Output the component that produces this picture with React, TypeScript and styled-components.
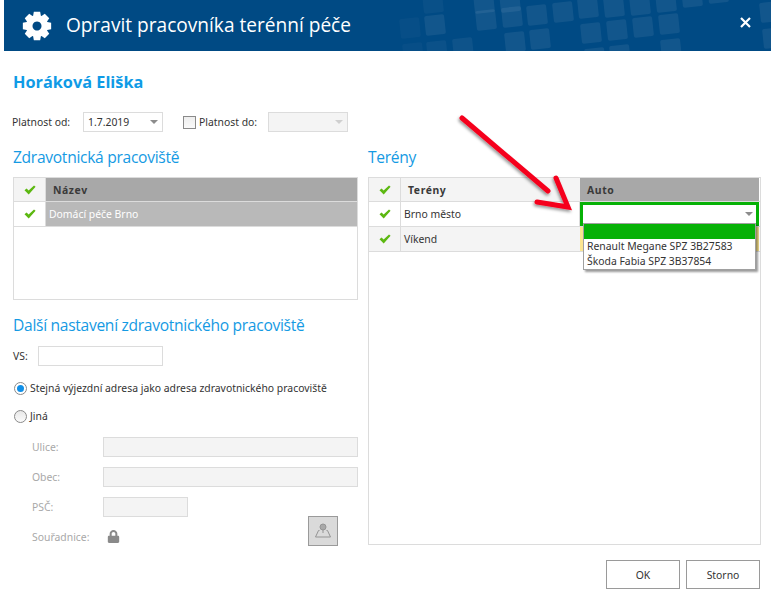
import React from 'react';
import styled, { createGlobalStyle } from 'styled-components';
import { FaLock } from 'react-icons/fa';

const GlobalStyle = createGlobalStyle`
  html, body {
    margin: 0;
    padding: 0;
    background: #ffffff;
  }
  body {
    width: 781px;
    height: 602px;
    overflow: hidden;
    font-family: "Noto Sans", "Liberation Sans", sans-serif;
    font-size: 10.4px;
    color: #333333;
  }
`;

const Page = styled.div`
  position: relative;
  width: 781px;
  height: 602px;
  padding: 0 10px 0 4px;
  box-sizing: border-box;
`;

const Header = styled.header`
  position: relative;
  height: 51px;
  background: #004a84;
  display: flex;
  align-items: center;
  padding: 0 20px 0 18px;
  overflow: hidden;
  color: #ffffff;
`;

const HeaderPattern = styled.svg`
  position: absolute;
  top: 0;
  left: 0;
  width: 767px;
  height: 51px;
`;

const HeaderTitle = styled.h1`
  position: relative;
  margin: 0 0 2px 14px;
  flex: 1;
  font-family: "Open Sans", sans-serif;
  font-weight: 400;
  font-size: 19.1px;
`;

const Body = styled.div`
  padding: 0 0 0 9px;
`;

const PersonName = styled.h2`
  margin: 0;
  padding-top: 21px;
  height: 41px;
  box-sizing: border-box;
  line-height: 20px;
  font-family: "Open Sans", sans-serif;
  font-size: 16.3px;
  font-weight: 700;
  color: #0f9be6;
`;

const ValidityRow = styled.div`
  display: flex;
  align-items: center;
  height: 20px;
  margin: 20px 0 0 -1px;
`;

const Label = styled.span<{ $muted?: boolean; $width?: number }>`
  display: inline-block;
  ${p => (p.$width ? `width: ${p.$width}px;` : '')}
  color: ${p => (p.$muted ? '#a8a8a8' : '#333333')};
  white-space: nowrap;
`;

const Select = styled.div<{ $disabled?: boolean; $width: number }>`
  width: ${p => p.$width}px;
  height: 20px;
  box-sizing: border-box;
  border: 1px solid #dcdcdc;
  background: ${p => (p.$disabled ? '#f4f4f4' : '#ffffff')};
  display: flex;
  align-items: center;
  justify-content: space-between;
  padding: 0 4px 0 4px;
  color: #333333;
`;

const Caret = styled.i<{ $light?: boolean }>`
  display: block;
  width: 0;
  height: 0;
  border-left: 4px solid transparent;
  border-right: 4px solid transparent;
  border-top: 4px solid ${p => (p.$light ? '#cfcfcf' : '#8c8c8c')};
`;

const CheckBox = styled.span`
  display: block;
  width: 11px;
  height: 11px;
  margin: 0 3px 0 20px;
  border: 1px solid #8a8a8a;
  background: linear-gradient(180deg, #eeeeee, #fafafa);
`;

const Columns = styled.div`
  display: grid;
  grid-template-columns: 345px 393px;
  column-gap: 10px;
  margin-top: 13px;
`;

const Column = styled.section`
  display: flex;
  flex-direction: column;
`;

const SectionTitle = styled.h3`
  margin: 0;
  height: 24px;
  line-height: 24px;
  font-family: "Open Sans", sans-serif;
  font-size: 15.6px;
  font-weight: 400;
  letter-spacing: -0.3px;
  color: #159ae3;
  white-space: nowrap;
`;

const GridBox = styled.div<{ $height: number }>`
  height: ${p => p.$height}px;
  margin-top: 8px;
  box-sizing: border-box;
  border: 1px solid #dcdcdc;
  background: #ffffff;
`;

const GridRow = styled.div<{ $columns: string; $height?: number }>`
  display: grid;
  grid-template-columns: ${p => p.$columns};
  height: ${p => p.$height ?? 25}px;
  box-sizing: border-box;
  border-bottom: 1px solid #dcdcdc;
`;

const CheckCell = styled.div<{ $shaded?: boolean }>`
  display: flex;
  align-items: center;
  justify-content: center;
  border-right: 1px solid #dcdcdc;
  background: ${p => (p.$shaded ? '#f4f4f4' : '#ffffff')};
`;

const HeadCell = styled.div<{ $dark?: boolean }>`
  display: flex;
  align-items: center;
  padding-left: 7px;
  background: ${p => (p.$dark ? '#a8a8a8' : '#f4f4f4')};
  font-weight: 700;
  letter-spacing: 0.6px;
  color: #3a3a3a;
`;

const DataCell = styled.div<{ $selected?: boolean; $shaded?: boolean }>`
  display: flex;
  align-items: center;
  padding-left: 3px;
  background: ${p => (p.$selected ? '#b9b9b9' : p.$shaded ? '#f4f4f4' : '#ffffff')};
  color: ${p => (p.$selected ? '#ffffff' : '#333333')};
  border-right: ${p => (p.$shaded || p.$selected ? '0' : '1px solid #dcdcdc')};
`;

const EditorCell = styled.div`
  box-sizing: border-box;
  border: 3px solid #06b106;
  background: #ffffff;
  display: flex;
  align-items: flex-start;
  justify-content: flex-end;
  padding: 7px 3px 0 0;
`;

const YellowCell = styled.div`
  background: #fbe590;
`;

const Dropdown = styled.div`
  position: absolute;
  top: 223px;
  left: 583px;
  width: 173px;
  height: 47px;
  box-sizing: border-box;
  border: 1px solid #a0a0a0;
  background: #ffffff;
  box-shadow: 2px 2px 2px rgba(0, 0, 0, 0.4);
  color: #333333;
`;

const DropdownOption = styled.div<{ $active?: boolean }>`
  height: 15px;
  line-height: 15px;
  padding-left: 3px;
  background: ${p => (p.$active ? '#06b106' : 'transparent')};
  white-space: nowrap;
`;

const SubTitle = styled(SectionTitle)`
  margin-top: 13px;
`;

const FormRow = styled.div`
  display: flex;
  align-items: center;
  height: 20px;
  margin-top: 9px;
`;

const TextInput = styled.div<{ $width: number; $disabled?: boolean }>`
  width: ${p => p.$width}px;
  height: 20px;
  box-sizing: border-box;
  border: 1px solid #dcdcdc;
  background: ${p => (p.$disabled ? '#f4f4f4' : '#ffffff')};
`;

const RadioRow = styled.label<{ $gap: number }>`
  display: flex;
  align-items: center;
  gap: 3px;
  height: 14px;
  margin-top: ${p => p.$gap}px;
  margin-left: 1px;
`;

const Radio = styled.span<{ $checked?: boolean }>`
  display: block;
  position: relative;
  width: 11px;
  height: 11px;
  border: 1px solid #8a8a8a;
  border-radius: 50%;
  background: ${p => (p.$checked ? '#ffffff' : 'linear-gradient(180deg, #e8e8e8, #fbfbfb)')};
  &::after {
    content: '';
    display: ${p => (p.$checked ? 'block' : 'none')};
    position: absolute;
    top: 2px;
    left: 2px;
    width: 7px;
    height: 7px;
    border-radius: 50%;
    background: #0f8fe8;
  }
`;

const AddressBlock = styled.div`
  margin-top: 14px;
  padding-left: 19px;
`;

const AddressRow = styled.div<{ $first?: boolean }>`
  display: flex;
  align-items: center;
  height: 20px;
  margin-top: ${p => (p.$first ? 0 : 10)}px;
`;

const CoordinatesRow = styled.div`
  display: flex;
  align-items: flex-start;
  height: 30px;
  margin-top: -1px;
`;

const CoordinatesLabel = styled(Label)`
  width: 71px;
  margin-top: 14px;
  color: #a8a8a8;
`;

const LockWrap = styled.span`
  display: flex;
  margin: 14px 0 0 4px;
  color: #8a8a8a;
`;

const MapButton = styled.button`
  display: flex;
  align-items: center;
  justify-content: center;
  width: 30px;
  height: 30px;
  margin-left: auto;
  margin-right: 20px;
  padding: 0;
  border: 1px solid #9a9a9a;
  background: #dadada;
`;

const Footer = styled.div`
  display: flex;
  justify-content: flex-end;
  gap: 6px;
  margin-top: 14px;
  padding-right: 11px;
`;

const Button = styled.button`
  width: 74px;
  height: 29px;
  padding: 0;
  border: 1px solid #9a9a9a;
  background: #ffffff;
  font-family: "Noto Sans", sans-serif;
  font-size: 10.4px;
  color: #333333;
`;

const ArrowOverlay = styled.svg`
  position: absolute;
  top: 105px;
  left: 450px;
  width: 140px;
  height: 115px;
  pointer-events: none;
`;

const CloseSvg = styled.svg`
  position: relative;
  margin-bottom: 6px;
`;

const GearSvg = styled.svg`
  position: relative;
`;

const Gear = () => {
  const cx = 15, cy = 15;
  const pts: string[] = [];
  for (let i = 0; i < 8; i++) {
    const a = (i * Math.PI) / 4;
    const spots: [number, number][] = [
      [11, -0.36], [14.5, -0.22], [14.5, 0.22], [11, 0.36],
    ];
    spots.forEach(([r, o]) => {
      pts.push(`${(cx + r * Math.cos(a + o)).toFixed(2)} ${(cy + r * Math.sin(a + o)).toFixed(2)}`);
    });
  }
  const d = `M${pts.join('L')}Z M15 10.5a4.5 4.5 0 1 0 0.01 0Z`;
  return (
    <GearSvg width="30" height="30" viewBox="0 0 30 30">
      <path d={d} fill="#ffffff" fillRule="evenodd" />
    </GearSvg>
  );
};

const Check = () => (
  <svg width="12" height="10" viewBox="0 0 12 10">
    <path d="M0.5 5.2 L2.6 3.6 L4.6 5.6 L10 0.6 L11.6 1.8 L4.7 9.4 Z" fill="#5cb811" />
  </svg>
);

const CloseIcon = () => (
  <CloseSvg width="11" height="11" viewBox="0 0 11 11">
    <path d="M1 1 L10 10 M10 1 L1 10" stroke="#ffffff" strokeWidth="2.2" />
  </CloseSvg>
);

const MapPin = () => (
  <svg width="18" height="18" viewBox="0 0 18 18" fill="none" stroke="#949494" strokeWidth="1">
    <circle cx="9" cy="5" r="3" fill="#a8a8a8" />
    <path d="M9 8 L9 11" />
    <path d="M5.5 8.5 L4.5 8.5 L1.5 15 L16.5 15 L13.5 8.5 L12.5 8.5" />
  </svg>
);

const squares: [number, number, number][] = [
  [423, -7, 0.5], [474, -7, 1], [500, -8, 1], [553, 2, 1], [578, -2, 1], [604, -3, 1], [630, -5, 1], [656, -8, 1], [682, -13, 1], [708, -17, 1], [760, 2, 1],
  [425, 15, 1], [476, 10, 1], [502, 7, 1], [527, 5, 1], [581, 23, 1], [607, 20, 1], [633, 17, 1], [659, 14, 1], [763, 28, 1],
  [400, 18, 0.4], [505, 32, 1], [530, 29, 1], [661, 39, 1],
  [403, 43, 0.4], [427, 41, 0.6], [453, 38, 0.8], [585, 48, 1], [610, 45, 1],
];

export default function App() {
  return (
    <>
      <GlobalStyle />
      <Page>
        <Header>
          <HeaderPattern viewBox="0 0 767 51">
            {squares.map(([x, y, o]) => (
              <rect
                key={`${x}-${y}`}
                x={x - 4}
                y={y}
                width="20"
                height="20"
                rx="2"
                fill="#ffffff"
                fillOpacity={0.07 * o}
                transform={`rotate(-6 ${x + 6} ${y + 10})`}
              />
            ))}
          </HeaderPattern>
          <Gear />
          <HeaderTitle>Opravit pracovníka terénní péče</HeaderTitle>
          <CloseIcon />
        </Header>

        <Body>
          <PersonName>Horáková Eliška</PersonName>

          <ValidityRow>
            <Label $width={71}>Platnost od:</Label>
            <Select $width={80}>
              1.7.2019
              <Caret />
            </Select>
            <CheckBox />
            <Label $width={69}>Platnost do:</Label>
            <Select $width={80} $disabled>
              <span />
              <Caret $light />
            </Select>
          </ValidityRow>

          <Columns>
            <Column>
              <SectionTitle>Zdravotnická pracoviště</SectionTitle>
              <GridBox $height={123}>
                <GridRow $columns="32px 1fr" $height={24}>
                  <CheckCell $shaded><Check /></CheckCell>
                  <HeadCell $dark>Název</HeadCell>
                </GridRow>
                <GridRow $columns="32px 1fr">
                  <CheckCell><Check /></CheckCell>
                  <DataCell $selected>Domácí péče Brno</DataCell>
                </GridRow>
              </GridBox>

              <SubTitle>Další nastavení zdravotnického pracoviště</SubTitle>
              <FormRow>
                <Label $width={25}>VS:</Label>
                <TextInput $width={125} />
              </FormRow>

              <RadioRow $gap={15}>
                <Radio $checked />
                Stejná výjezdní adresa jako adresa zdravotnického pracoviště
              </RadioRow>
              <RadioRow $gap={14}>
                <Radio />
                Jiná
              </RadioRow>

              <AddressBlock>
                <AddressRow $first>
                  <Label $muted $width={71}>Ulice:</Label>
                  <TextInput $width={255} $disabled />
                </AddressRow>
                <AddressRow>
                  <Label $muted $width={71}>Obec:</Label>
                  <TextInput $width={255} $disabled />
                </AddressRow>
                <AddressRow>
                  <Label $muted $width={71}>PSČ:</Label>
                  <TextInput $width={85} $disabled />
                </AddressRow>
                <CoordinatesRow>
                  <CoordinatesLabel>Souřadnice:</CoordinatesLabel>
                  <LockWrap><FaLock size={13} /></LockWrap>
                  <MapButton><MapPin /></MapButton>
                </CoordinatesRow>
              </AddressBlock>
            </Column>

            <Column>
              <SectionTitle>Terény</SectionTitle>
              <GridBox $height={368}>
                <GridRow $columns="32px 179px 179px" $height={24}>
                  <CheckCell $shaded><Check /></CheckCell>
                  <HeadCell>Terény</HeadCell>
                  <HeadCell $dark>Auto</HeadCell>
                </GridRow>
                <GridRow $columns="32px 179px 179px">
                  <CheckCell><Check /></CheckCell>
                  <DataCell>Brno město</DataCell>
                  <EditorCell><Caret /></EditorCell>
                </GridRow>
                <GridRow $columns="32px 179px 179px">
                  <CheckCell $shaded><Check /></CheckCell>
                  <DataCell $shaded>Víkend</DataCell>
                  <YellowCell />
                </GridRow>
              </GridBox>
            </Column>
          </Columns>

          <Footer>
            <Button>OK</Button>
            <Button>Storno</Button>
          </Footer>
        </Body>

        <Dropdown>
          <DropdownOption $active />
          <DropdownOption>Renault Megane SPZ 3B27583</DropdownOption>
          <DropdownOption>Škoda Fabia SPZ 3B37854</DropdownOption>
        </Dropdown>

        <ArrowOverlay viewBox="0 0 140 115">
          <defs>
            <filter id="arrow-shadow" x="-20%" y="-20%" width="140%" height="140%">
              <feDropShadow dx="-1" dy="2" stdDeviation="1.5" floodColor="#000000" floodOpacity="0.4" />
            </filter>
          </defs>
          <g filter="url(#arrow-shadow)">
            <path d="M12 13 L98 86" fill="none" stroke="#f5001e" strokeWidth="5" strokeLinecap="round" />
            <path d="M87 97 L118 102 L106 73" fill="none" stroke="#f5001e" strokeWidth="5" strokeLinecap="round" strokeLinejoin="miter" />
          </g>
        </ArrowOverlay>
      </Page>
    </>
  );
}
